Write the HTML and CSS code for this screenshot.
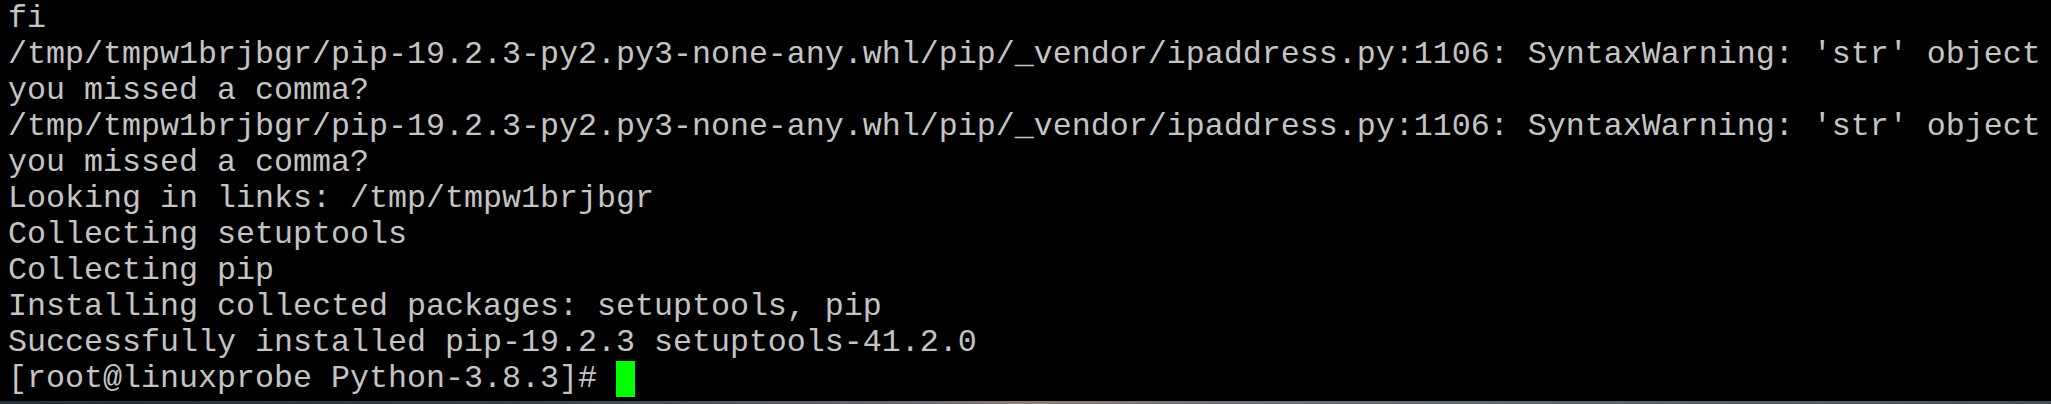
FILE: index.html
```html
<!DOCTYPE html>
<html>
<head>
<meta charset="utf-8">
<link rel="stylesheet" href="styles.css">
</head>
<body>
<div class="screen">
<pre class="term">fi
/tmp/tmpw1brjbgr/pip-19.2.3-py2.py3-none-any.whl/pip/_vendor/ipaddress.py:1106: SyntaxWarning: 'str' object
you missed a comma?
/tmp/tmpw1brjbgr/pip-19.2.3-py2.py3-none-any.whl/pip/_vendor/ipaddress.py:1106: SyntaxWarning: 'str' object
you missed a comma?
Looking in links: /tmp/tmpw1brjbgr
Collecting setuptools
Collecting pip
Installing collected packages: setuptools, pip
Successfully installed pip-19.2.3 setuptools-41.2.0
[root@linuxprobe Python-3.8.3]# <span class="cursor"> </span></pre>
</div>
<div class="desktop"></div>
</body>
</html>
```

FILE: styles.css
```css
html, body {
  margin: 0;
  padding: 0;
  background: #000;
  overflow: hidden;
}
.screen {
  height: 401px;
  background: #000;
  padding: 1px 0 0 8px;
  box-sizing: border-box;
}
.term {
  margin: 0;
  font-family: "Liberation Mono", "Courier New", monospace;
  font-size: 31.66px;
  line-height: 36px;
  color: #c4c4c4;
  white-space: pre;
}
.cursor {
  display: inline-block;
  width: 19px;
  height: 36px;
  vertical-align: top;
  background: #00ff00;
}
.desktop {
  height: 3px;
  background: linear-gradient(90deg, #283033 0%, #3a4246 25%, #6b6a70 45%, #8a7e7a 50%, #6e7076 60%, #5c6468 80%, #4a5256 100%);
}
```
